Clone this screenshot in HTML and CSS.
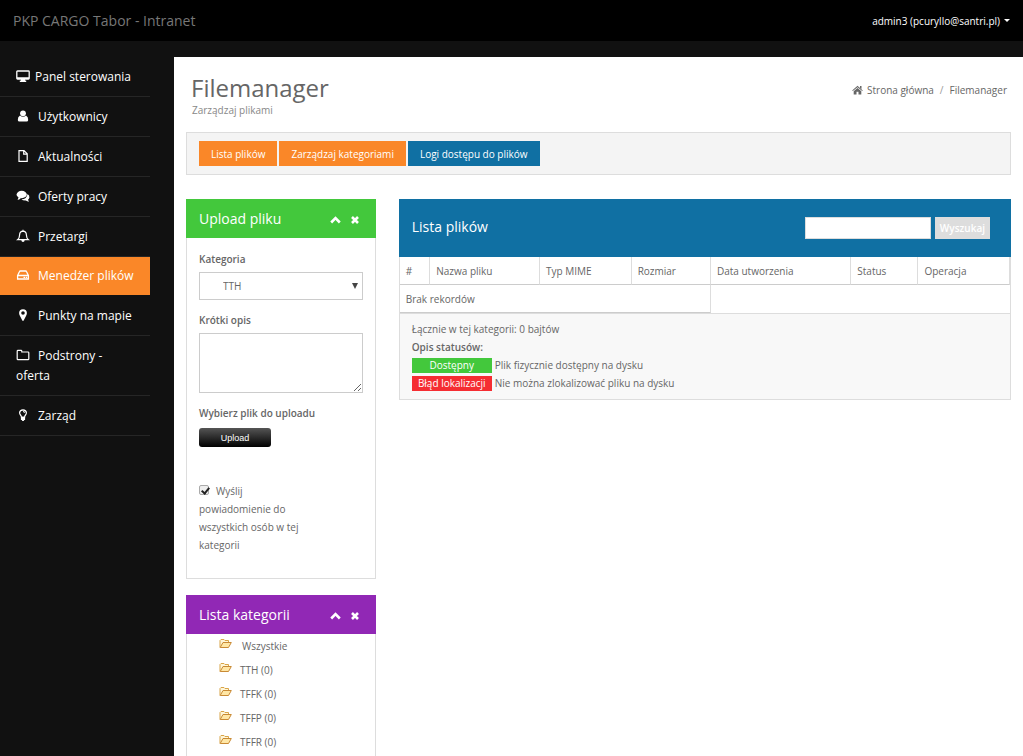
FILE: index.html
```html
<!DOCTYPE html>
<html lang="pl">
<head>
<meta charset="utf-8">
<meta name="viewport" content="width=device-width, initial-scale=1">
<title>PKP CARGO Tabor - Intranet</title>
<link rel="stylesheet" href="styles.css">
</head>
<body>
<svg class="defs" width="0" height="0" aria-hidden="true">
  <symbol id="folder" viewBox="0 0 13 11">
    <path d="M1 9.500V2.500L2 1.500H5L6 2.500H9.500V4.500" fill="#fff6d8" stroke="#d9a548"/>
    <path d="M1.200 9.500L4 4.500H12.300L9.500 9.500Z" fill="#ffe7a6" stroke="#c98a35"/>
  </symbol>
  <symbol id="up" viewBox="0 0 11 8"><path d="M1.200 6.500L5.500 2.200L9.800 6.500" fill="none" stroke="currentColor" stroke-width="2.600"/></symbol>
  <symbol id="close" viewBox="0 0 8 8"><path d="M1 1L7 7M7 1L1 7" fill="none" stroke="currentColor" stroke-width="2.600"/></symbol>
</svg>

<header class="topbar">
  <a class="brand" href="#">PKP CARGO Tabor - Intranet</a>
  <button class="user" type="button">admin3 (pcuryllo@santri.pl) <span class="caret"></span></button>
</header>

<div class="layout">
  <nav class="sidebar">
    <a class="item" href="#"><svg class="ico wide" viewBox="0 0 14 14"><path d="M1.500 2H12.500Q13.200 2 13.200 2.700V9.300Q13.200 10 12.500 10H1.500Q.8 10 .8 9.300V2.700Q.8 2 1.500 2Z" fill="none" stroke="currentColor" stroke-width="1.300"/><path d="M5 10H9V11.500H10.200V13H3.800V11.500H5ZM1 8.300H13V10H1Z" fill="currentColor"/></svg>Panel sterowania</a>
    <a class="item" href="#"><svg class="ico" viewBox="0 0 14 14"><circle cx="7" cy="4.300" r="2.900" fill="currentColor"/><path d="M4 6.500Q7 9 10 6.500Q12.300 7.500 12.200 11Q12.100 12.500 10.600 12.500H3.400Q1.900 12.500 1.800 11Q1.700 7.500 4 6.500Z" fill="currentColor"/></svg>Użytkownicy</a>
    <a class="item" href="#"><svg class="ico" viewBox="0 0 14 14"><path d="M3 1.600H8L11.200 4.800V12.400H3ZM7.700 1.600V5.200H11.200" fill="none" stroke="currentColor" stroke-width="1.200"/></svg>Aktualności</a>
    <a class="item" href="#"><svg class="ico" viewBox="0 0 14 14"><ellipse cx="5.700" cy="5.500" rx="5.100" ry="3.700" fill="currentColor"/><path d="M2.800 7.500L1.600 11Q4 10.500 5 9ZM11.500 5Q13.700 6.400 13.400 8.500Q13.100 10 12 10.800L13 12.700Q11 12.500 9.900 11.500Q6.800 11.700 5.500 10.300Q10.800 10.200 11.500 5Z" fill="currentColor"/></svg>Oferty pracy</a>
    <a class="item" href="#"><svg class="ico" viewBox="0 0 14 14"><path d="M7 2.200Q10.300 2.400 10.400 6Q10.500 9.200 12.400 10.700H1.600Q3.500 9.200 3.600 6Q3.700 2.400 7 2.200ZM7 .8V2.200" fill="none" stroke="currentColor" stroke-width="1.200"/><path d="M5.300 11H8.700Q8.500 12.900 7 12.900Q5.500 12.900 5.300 11Z" fill="currentColor"/></svg>Przetargi</a>
    <a class="item active" href="#" aria-current="page"><svg class="ico" viewBox="0 0 14 14"><path d="M1.600 7.500L3.400 3.700Q3.700 3 4.400 3H9.600Q10.300 3 10.600 3.700L12.400 7.500V11H1.600ZM1.600 7.500H12.400" fill="none" stroke="currentColor" stroke-width="1.300"/><path d="M7.500 8.700H9V10H7.500ZM9.700 8.700H11.200V10H9.700Z" fill="currentColor"/></svg>Menedżer plików</a>
    <a class="item" href="#"><svg class="ico" viewBox="0 0 14 14"><path fill-rule="evenodd" d="M7 1.200Q10.900 1.400 10.900 5Q10.900 6.300 10 8L7.700 12.600Q7 13.300 6.300 12.600L4 8Q3.100 6.300 3.100 5Q3.100 1.400 7 1.200ZM7 3.200A1.800 1.800 0 1 0 7 6.800A1.800 1.800 0 1 0 7 3.200Z" fill="currentColor"/></svg>Punkty na mapie</a>
    <a class="item" href="#"><svg class="ico" viewBox="0 0 14 14"><path d="M1.200 3.200Q1.200 2.400 2 2.400H5Q5.800 2.400 5.800 3.200V4H12Q12.800 4 12.800 4.800V11Q12.800 11.700 12 11.700H2Q1.200 11.700 1.200 11Z" fill="none" stroke="currentColor" stroke-width="1.200"/></svg>Podstrony - oferta</a>
    <a class="item" href="#"><svg class="ico" viewBox="0 0 14 14"><path d="M5.400 9Q5.400 8 4.500 7Q3.600 6 3.600 4.800Q3.800 1.900 7 1.800Q10.200 1.900 10.400 4.800Q10.400 6 9.500 7Q8.600 8 8.600 9ZM7 3.500Q8.500 3.600 8.600 4.800" fill="none" stroke="currentColor" stroke-width="1.200"/><path d="M4.900 9H9.100V12H8.200L7.700 13H6.300L5.800 12H4.900Z" fill="currentColor"/></svg>Zarząd</a>
  </nav>

  <main class="content">
    <div class="page-head">
      <div>
        <h1>Filemanager</h1>
        <p class="sub">Zarządzaj plikami</p>
      </div>
      <nav class="crumbs">
        <svg class="home" viewBox="0 0 11 10"><path d="M5.500 .8L10.800 5.400L10.200 6.100L5.500 2.200L.8 6.100L.2 5.400ZM8 1H9.500V4L8 2.800ZM5.500 3L9.300 6.200V9.500H6.500V6.800H4.500V9.500H1.700V6.200Z" fill="currentColor"/></svg>
        <a href="#">Strona główna</a><span class="sep">/</span><a href="#">Filemanager</a>
      </nav>
    </div>

    <div class="actions">
      <a class="btn" href="#">Lista plików</a>
      <a class="btn" href="#">Zarządzaj kategoriami</a>
      <a class="btn blue" href="#">Logi dostępu do plików</a>
    </div>

    <div class="columns">
      <div class="side">
        <section class="card">
          <div class="card-head green">
            <h2>Upload pliku</h2>
            <button class="tool" type="button" aria-label="Zwiń"><svg class="up"><use href="#up"/></svg></button>
            <button class="tool" type="button" aria-label="Zamknij"><svg class="close"><use href="#close"/></svg></button>
          </div>
          <form class="form">
            <label class="lbl" for="cat">Kategoria</label>
            <div class="select-wrap"><select id="cat"><option>TTH</option></select></div>
            <label class="lbl" for="desc">Krótki opis</label>
            <textarea id="desc"></textarea>
            <label class="lbl" for="upload">Wybierz plik do uploadu</label>
            <button class="upload" id="upload" type="button">Upload</button>
            <label class="notify"><input type="checkbox" checked>Wyślij powiadomienie do wszystkich osób w tej kategorii</label>
          </form>
        </section>

        <section class="card">
          <div class="card-head purple">
            <h2>Lista kategorii</h2>
            <button class="tool" type="button" aria-label="Zwiń"><svg class="up"><use href="#up"/></svg></button>
            <button class="tool" type="button" aria-label="Zamknij"><svg class="close"><use href="#close"/></svg></button>
          </div>
          <ul class="cats">
            <li class="all"><svg class="folder"><use href="#folder"/></svg><a href="#">Wszystkie</a></li>
            <li><svg class="folder"><use href="#folder"/></svg><a href="#">TTH (0)</a></li>
            <li><svg class="folder"><use href="#folder"/></svg><a href="#">TFFK (0)</a></li>
            <li><svg class="folder"><use href="#folder"/></svg><a href="#">TFFP (0)</a></li>
            <li><svg class="folder"><use href="#folder"/></svg><a href="#">TFFR (0)</a></li>
          </ul>
        </section>
      </div>

      <section class="card files">
        <div class="files-head">
          <h2>Lista plików</h2>
          <form class="search">
            <input type="text" aria-label="Szukaj">
            <button type="button">Wyszukaj</button>
          </form>
        </div>
        <table>
          <colgroup><col class="c-no"><col class="c-name"><col class="c-mime"><col class="c-size"><col class="c-date"><col class="c-status"><col class="c-op"></colgroup>
          <thead>
            <tr><th>#</th><th>Nazwa pliku</th><th>Typ MIME</th><th>Rozmiar</th><th>Data utworzenia</th><th>Status</th><th>Operacja</th></tr>
          </thead>
          <tbody>
            <tr><td colspan="4">Brak rekordów</td></tr>
          </tbody>
        </table>
        <div class="legend">
          <p>Łącznie w tej kategorii: 0 bajtów</p>
          <p><b>Opis statusów:</b></p>
          <p><span class="tag ok">Dostępny</span>Plik fizycznie dostępny na dysku</p>
          <p><span class="tag bad">Błąd lokalizacji</span>Nie można zlokalizować pliku na dysku</p>
        </div>
      </section>
    </div>
  </main>
</div>
</body>
</html>
```
FILE: styles.css
```css
* { box-sizing: border-box; }
html, body { height: 100%; }
body {
  margin: 0;
  display: flex;
  flex-direction: column;
  overflow: hidden;
  background: #111;
  color: #666;
  font: 10px/18px "Open Sans", "Liberation Sans", sans-serif;
}
h1, h2, p, ul { margin: 0; padding: 0; font-weight: 400; }
a { color: inherit; text-decoration: none; }
button, input, select, textarea { font: inherit; color: inherit; border-radius: 0; margin: 0; }
.defs { position: absolute; }

.topbar {
  flex: none;
  display: flex;
  justify-content: space-between;
  align-items: center;
  height: 41px;
  padding: 0 13px;
  background: #000;
}
.brand { color: #777; font-size: 14px; }
.user { display: flex; align-items: center; gap: 4px; padding: 0; border: 0; background: none; color: #fff; }
.caret { border: 3px solid transparent; border-top-color: #fff; border-bottom: 0; }

.layout { flex: 1; min-height: 0; display: flex; padding-top: 16px; }
.sidebar { flex: none; width: 150px; margin-right: 24px; }
.item {
  display: block;
  padding: 10px 16px 9px;
  border-bottom: 1px solid #262626;
  color: #fff;
  font-size: 12px;
  line-height: 20px;
}
.item.active { padding-top: 9px; background: #fa8728; border-color: #111; }
.ico { width: 14px; height: 14px; margin-right: 8px; vertical-align: -2px; }
.ico.wide { margin-right: 5px; }

.content { flex: 1; min-width: 0; padding: 12px; background: #fff; }
.page-head { display: flex; justify-content: space-between; padding: 4px 4px 14px 5px; }
h1 { font-size: 24px; line-height: 30px; }
.sub { line-height: 15px; color: #888; padding-left: 1px; }
.crumbs { display: flex; height: 34px; align-items: center; }
.home { width: 11px; height: 10px; margin-right: 4px; }
.sep { margin: 0 6px; color: #999; }

.actions { display: flex; gap: 2px; padding: 8px 12px; border: 1px solid #ddd; background: #f4f4f4; }
.btn { padding: 4px 12px 3px; background: #fa8728; color: #fff; }
.btn.blue { background: #1070a3; }

.columns { display: flex; align-items: flex-start; gap: 23px; margin-top: 24px; }
.side { flex: none; width: 23%; }
.card { border: 1px solid #ddd; border-top: 0; margin-bottom: 16px; }
.side .card:last-child { margin-bottom: -30px; padding-bottom: 30px; }
.card-head { display: flex; align-items: center; gap: 10px; height: 39px; margin: 0 -1px; padding: 0 17px 0 13px; color: #fff; }
h2 { flex: 1; font-size: 14px; line-height: 20px; color: #fff; }
.green { background: #43c83c; }
.purple { background: #9128b5; }
.tool { display: flex; padding: 3px 0 0; border: 0; background: none; }
.up { width: 11px; height: 8px; }
.close { width: 8px; height: 8px; }

.form { display: flex; flex-direction: column; align-items: flex-start; padding: 12px 12px 24px; }
.lbl { font-weight: 600; margin-bottom: 4px; }
.select-wrap { position: relative; width: 100%; margin-bottom: 11px; }
.select-wrap::after {
  content: "";
  position: absolute;
  right: 5px;
  top: 11px;
  border: 3px solid transparent;
  border-top: 6px solid #444;
  border-bottom: 0;
}
select { display: block; width: 100%; height: 28px; padding: 0 23px; border: 1px solid #ccc; background: #fff; appearance: none; }
textarea { width: 100%; height: 60px; margin-bottom: 11px; border: 1px solid #ccc; }
.upload {
  width: 72px;
  height: 19px;
  margin: 2px 0 35px;
  padding: 0;
  border: 0;
  border-radius: 3px;
  background: linear-gradient(#555, #000);
  color: #fff;
  font: 9px/18px "Liberation Sans", sans-serif;
}
.notify { width: 116px; }
.notify input { width: 10px; height: 10px; margin-right: 7px; appearance: none; border: 1px solid #aaa; border-radius: 2px; background: #eee; position: relative; }
.notify input:checked::after {
  content: "";
  position: absolute;
  left: 3px;
  top: 0;
  width: 3px;
  height: 6px;
  border: solid #222;
  border-width: 0 2px 2px 0;
  transform: rotate(40deg);
}

.cats { list-style: none; padding-left: 32px; }
.cats li { display: flex; align-items: center; gap: 8px; height: 24px; }
.cats .all { gap: 10px; }
.folder { width: 13px; height: 11px; margin-bottom: 6px; }

.files { flex: 1; min-width: 0; }
.files-head { display: flex; align-items: center; height: 58px; margin: 0 -1px; padding: 0 21px 2px 13px; background: #1070a3; }
.search { display: flex; gap: 4px; padding-top: 2px; }
.search input { width: 126px; height: 22px; border: 1px solid #ddd; background: #fff; }
.search button { height: 22px; padding: 0 5px; border: 0; background: #ddd; color: #fff; font-weight: 600; }

table { width: 100%; table-layout: fixed; border-collapse: separate; border-spacing: 0; }
.c-no { width: 5%; }
.c-name { width: 18%; }
.c-mime { width: 15%; }
.c-size { width: 13%; }
.c-date { width: 23%; }
.c-status { width: 11%; }
.c-op { width: 15%; }
th, td { height: 28px; padding: 0 6px; text-align: left; font-weight: 400; border-right: 1px solid #ddd; border-bottom: 1px solid #ccc; }
.legend { padding: 6px 12px 7px; border-top: 1px solid #ddd; background: #f8f8f8; }
.legend b { font-weight: 600; }
.tag { display: inline-block; width: 80px; margin-right: 3px; color: #fff; line-height: 15px; text-align: center; }
.ok { background: #43c83c; }
.bad { background: #f52d32; }
```
